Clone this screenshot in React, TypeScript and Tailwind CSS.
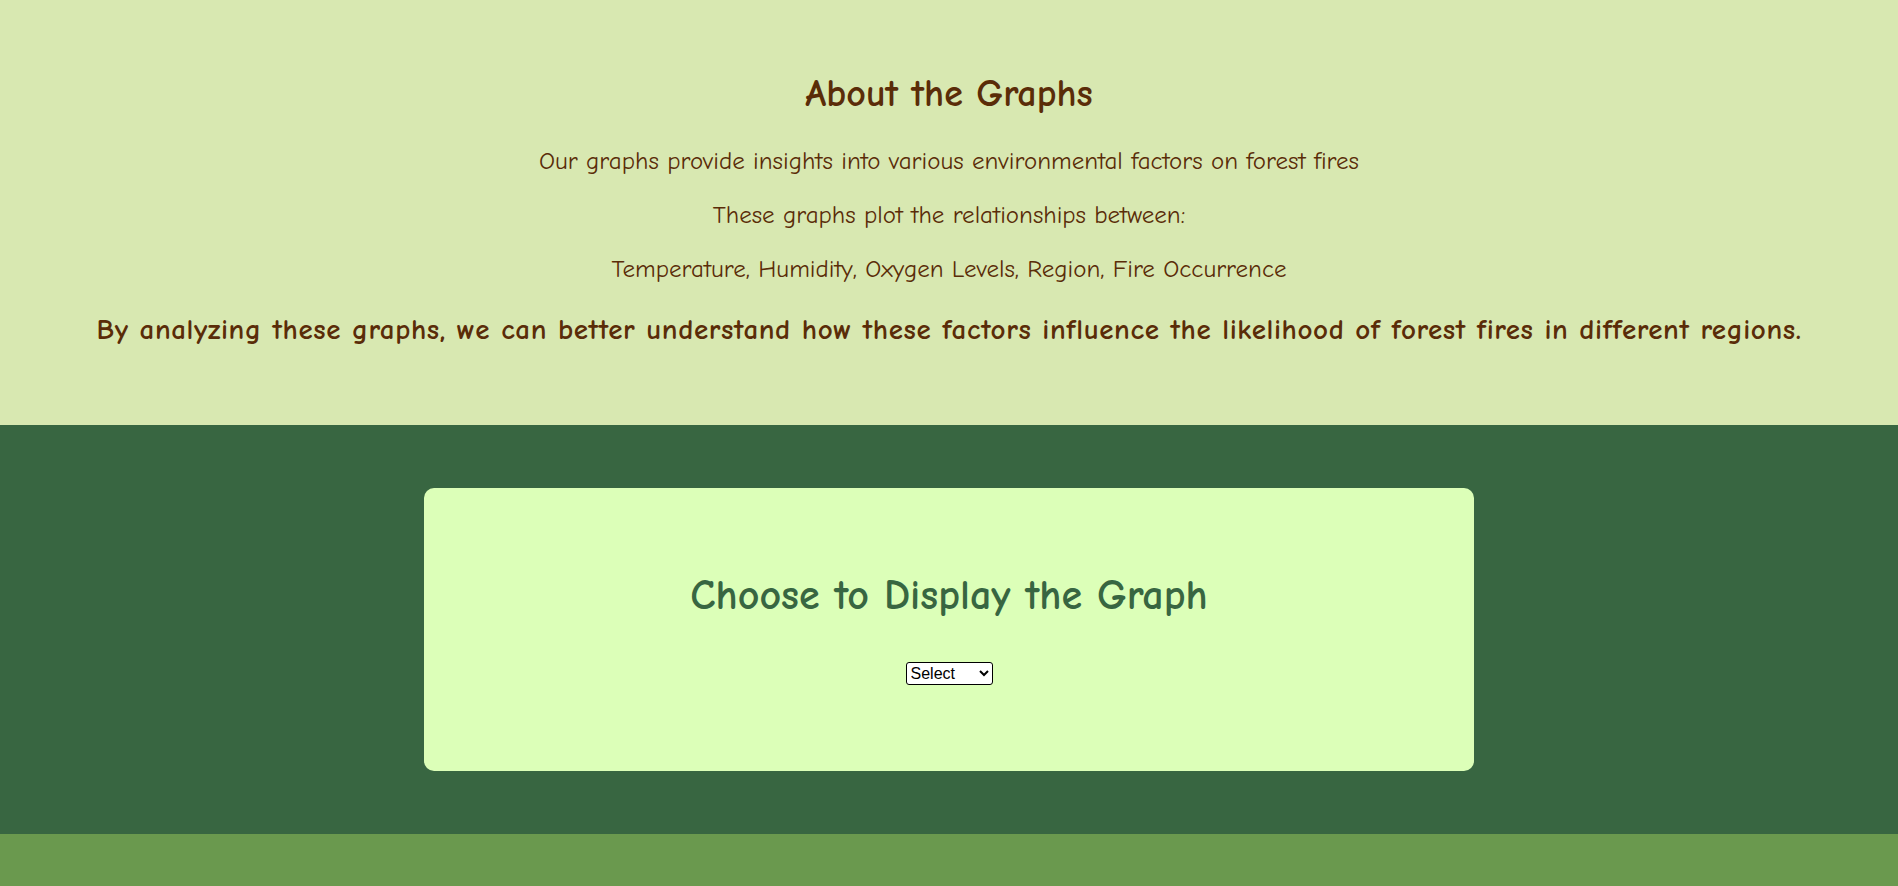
import React, { useState } from 'react';

const comic = "font-['Comic_Sans_MS','Comic_Neue','Noto_Sans',sans-serif]";

export default function App() {
  const [graph, setGraph] = useState('');

  return (
    <div className={`w-full min-h-screen flex flex-col ${comic}`}>
      <section className="bg-[#d8e8b1] text-[#5a2c08] flex flex-col items-center pt-[71px] pb-[76px]">
        <h1 className="text-[38px] leading-[46px] font-bold">About the Graphs</h1>
        <p className="mt-[28px] text-[25px] leading-[32px]">
          Our graphs provide insights into various environmental factors on forest fires
        </p>
        <p className="mt-[22px] text-[25px] leading-[32px]">These graphs plot the relationships between:</p>
        <p className="mt-[22px] text-[25px] leading-[32px]">
          Temperature, Humidity, Oxygen Levels, Region, Fire Occurrence
        </p>
        <h3 className="mt-[26px] text-[29px] leading-[38px] font-bold tracking-[0.6px]">
          By analyzing these graphs, we can better understand how these factors influence the likelihood of forest fires in different regions.
        </h3>
      </section>

      <section className="bg-[#386641] flex justify-center py-[63px]">
        <div className="w-[1050px] bg-[#dcffb8] rounded-[10px] flex flex-col items-center pt-[82px] pb-[86px]">
          <h2 className="text-[42px] leading-[52px] font-bold text-[#386641]">Choose to Display the Graph</h2>
          <select
            value={graph}
            onChange={(e) => setGraph(e.target.value)}
            className="mt-[40px] w-[87px] h-[23px] bg-white text-black border-[1.5px] border-black rounded-[3px] font-['Arial','Liberation_Sans',sans-serif] text-[16px]"
          >
            <option value="">Select</option>
            <option value="temperature">Temp</option>
            <option value="humidity">Humidity</option>
            <option value="oxygen">Oxygen</option>
            <option value="region">Region</option>
          </select>
        </div>
      </section>

      <footer className="bg-[#6a994e] flex-1 min-h-[52px]" />
    </div>
  );
}
